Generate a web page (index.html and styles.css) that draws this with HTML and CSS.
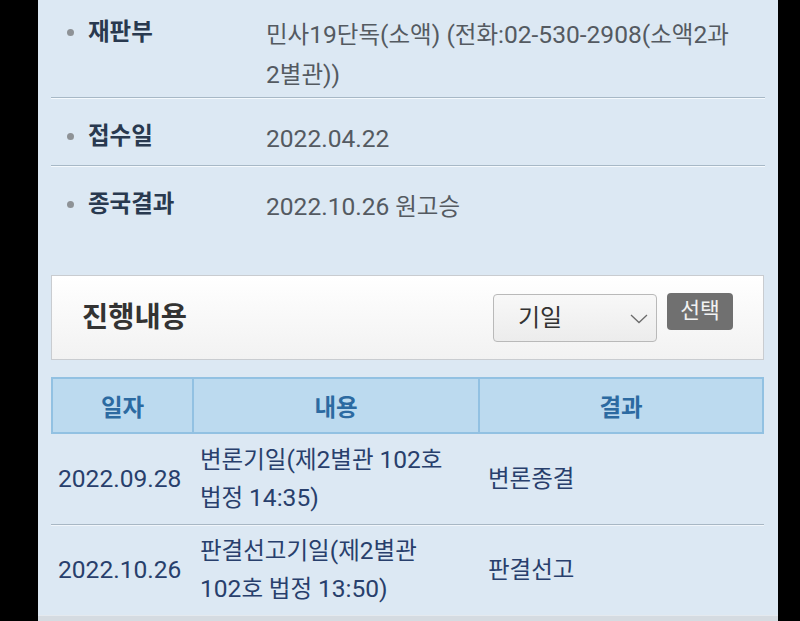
FILE: index.html
```html
<!DOCTYPE html>
<html lang="ko">
<head>
<meta charset="utf-8">
<title>사건 진행내용</title>
<link rel="stylesheet" href="styles.css">
</head>
<body>
<div class="screen">
  <div class="panel">
    <ul class="info">
      <li class="row first">
        <span class="label">재판부</span>
        <span class="value">민사<span class="n">19</span>단독<span class="n">(</span>소액<span class="n">) (</span>전화<span class="n">:02-530-2908(</span>소액<span class="n">2</span>과 <span class="n">2</span>별관<span class="n">))</span></span>
      </li>
      <li class="row">
        <span class="label">접수일</span>
        <span class="value"><span class="n">2022.04.22</span></span>
      </li>
      <li class="row last">
        <span class="label">종국결과</span>
        <span class="value"><span class="n">2022.10.26</span> 원고승</span>
      </li>
    </ul>

    <div class="box">
      <h2 class="box-title">진행내용</h2>
      <div class="controls">
        <div class="select">
          <span class="select-text">기일</span>
          <svg class="chev" width="18" height="10" viewBox="0 0 18 10"><polyline points="1,1 9,8.5 17,1" fill="none" stroke="#6b6b6b" stroke-width="1.3"/></svg>
        </div>
        <div class="btn">선택</div>
      </div>
    </div>

    <div class="grid">
      <div class="head">
        <div class="hc">일자</div>
        <div class="hc sep">내용</div>
        <div class="hc sep">결과</div>
      </div>
      <div class="brow">
        <div class="c date"><span class="n">2022.09.28</span></div>
        <div class="c text">변론기일<span class="n">(</span>제<span class="n">2</span>별관 <span class="n">102</span>호 법정 <span class="n">14:35)</span></div>
        <div class="c res">변론종결</div>
      </div>
      <div class="brow">
        <div class="c date"><span class="n">2022.10.26</span></div>
        <div class="c text">판결선고기일<span class="n">(</span>제<span class="n">2</span>별관 <span class="n">102</span>호 법정 <span class="n">13:50)</span></div>
        <div class="c res">판결선고</div>
      </div>
    </div>
    <div class="band"></div>
  </div>
</div>
</body>
</html>
```

FILE: styles.css
```css
html, body {
  margin: 0;
  padding: 0;
  background: #000;
  height: 100%;
  overflow: hidden;
}
.screen {
  width: 800px;
  height: 621px;
  background: #000;
  overflow: hidden;
}
.panel {
  margin-left: 38px;
  width: 740px;
  height: 621px;
  background: #dce8f3;
  font-family: Roboto, "Noto Sans CJK KR", sans-serif;
  word-break: keep-all;
  overflow: hidden;
}
.n {
  font-size: 1.045em;
  line-height: 1;
}

/* info list */
.info {
  list-style: none;
  margin: 0;
  padding: 0 13px;
}
.row {
  display: flex;
  align-items: flex-start;
  padding: 21px 0 6px;
  border-bottom: 1px solid #a7b8c6;
  box-shadow: 0 1px 0 #f4f9fd;
}
.row.first {
  padding-top: 15px;
  padding-bottom: 2px;
}
.row.last {
  border-bottom: none;
  box-shadow: none;
}
.label {
  position: relative;
  flex: 0 0 178px;
  padding-left: 37px;
  font-size: 23.5px;
  line-height: 34px;
  font-weight: 700;
  color: #29394f;
}
.label::before {
  content: "";
  position: absolute;
  left: 16px;
  top: 14px;
  width: 7px;
  height: 7px;
  border-radius: 50%;
  background: #8e9296;
}
.value {
  flex: 1;
  font-size: 23.5px;
  line-height: 40px;
  color: #545a61;
}

/* box */
.box {
  margin: 42px 14px 0 13px;
  height: 83px;
  border: 1px solid #c9ccd0;
  background: linear-gradient(#ffffff, #f2f2f2);
  display: flex;
  align-items: center;
  padding: 0 30px 0 30px;
}
.box-title {
  flex: 1;
  margin: 0;
  font-size: 28.5px;
  font-weight: 700;
  color: #333;
  line-height: 34px;
}
.controls {
  display: flex;
  align-items: flex-start;
  gap: 10px;
  margin-top: -1px;
}
.select {
  box-sizing: border-box;
  width: 164px;
  height: 48px;
  border: 1px solid #b9b9b9;
  border-radius: 4px;
  background: linear-gradient(#f8f8f8, #ececec);
  display: flex;
  align-items: center;
  padding: 0 8px 0 24px;
  margin-top: 1px;
}
.select-text {
  flex: 1;
  font-size: 24px;
  color: #333;
  line-height: 30px;
}
.chev {
  display: block;
  margin-top: 3px;
}
.btn {
  box-sizing: border-box;
  width: 66px;
  height: 37px;
  border-radius: 4px;
  background: #707070;
  color: #f2f2f2;
  font-size: 21.5px;
  line-height: 35px;
  text-align: center;
}

/* table */
.grid {
  margin: 17px 14px 0 13px;
}
.head {
  box-sizing: border-box;
  height: 57px;
  display: grid;
  grid-template-columns: 139px 286px 1fr;
  border: 2px solid #92c1e2;
  background: #bcdaef;
}
.hc {
  display: flex;
  align-items: center;
  justify-content: center;
  font-size: 23.5px;
  font-weight: 700;
  color: #2c6aa1;
}
.hc.sep {
  border-left: 2px solid #92c1e2;
}
.brow {
  display: grid;
  grid-template-columns: 141px 286px 1fr;
  align-items: center;
  padding: 7px 0;
  border-bottom: 1px solid #a8b7c4;
  box-shadow: 0 1px 0 #f1f6fb;
}
.brow:last-child {
  border-bottom: none;
  box-shadow: none;
}
.c {
  font-size: 23.5px;
  line-height: 38px;
  color: #283f6c;
}
.date {
  padding-left: 7px;
}
.text {
  padding-left: 8px;
  padding-right: 6px;
}
.res {
  padding-left: 10px;
}
.band {
  height: 12px;
  margin-top: 0;
  background: #d5dbe1;
  border-top: 1px solid #e4e9ee;
}
```
